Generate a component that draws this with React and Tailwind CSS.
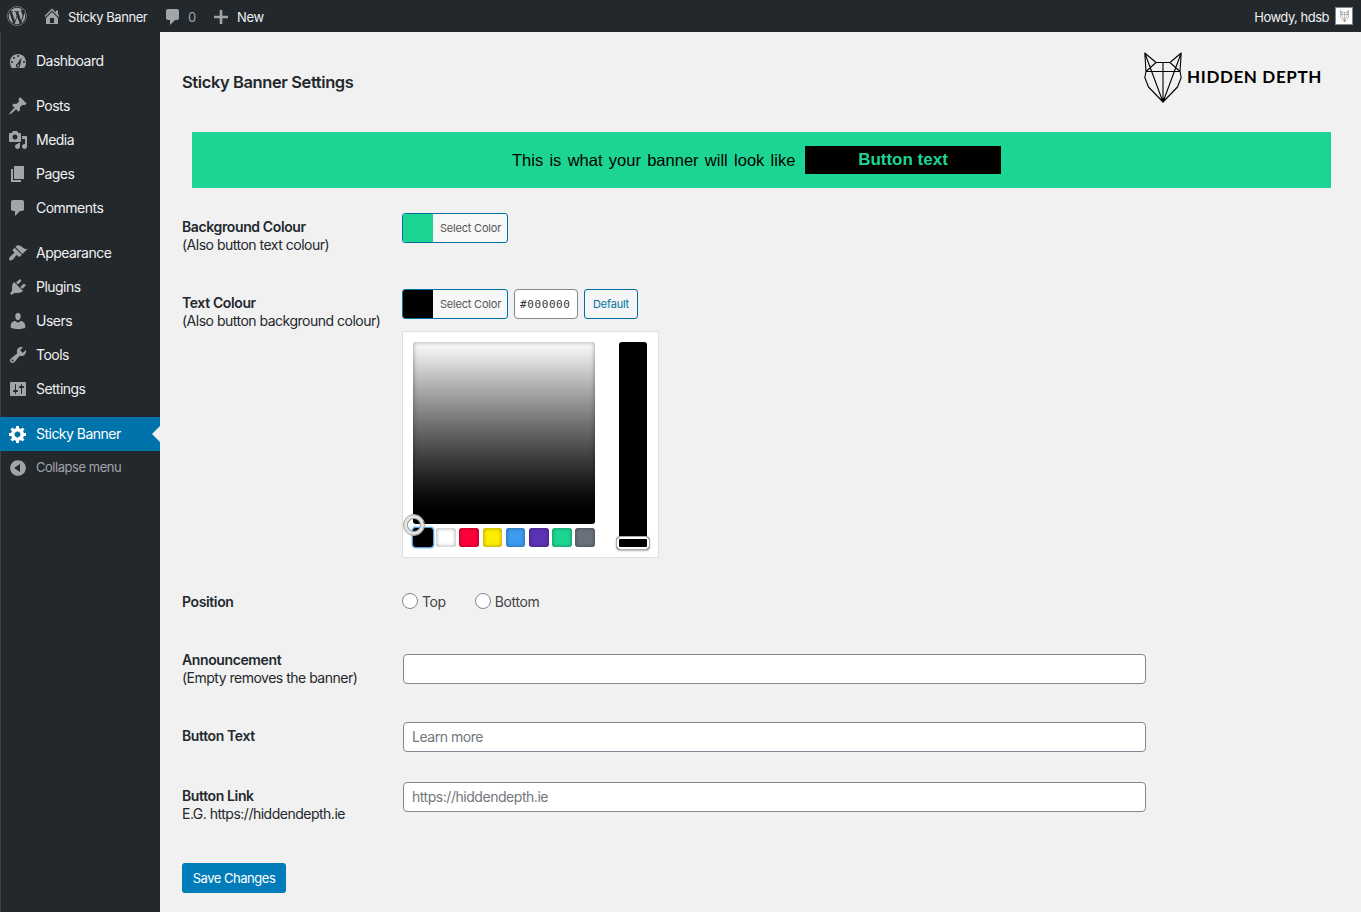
import React from "react";
import { FaWordpress } from "react-icons/fa";

const paths = {
  dashboard:
    "M3.76 17h12.48A7.96 7.96 0 0 0 18 11c0-4.42-3.58-8-8-8s-8 3.58-8 8c0 2.2.66 4.400 1.760 6zM10 4a1 1 0 1 1 0 2 1 1 0 0 1 0-2zM6 6a1 1 0 1 1 0 2 1 1 0 0 1 0-2zM13.500 6.500l-1.300 8a2.200 2.200 0 1 1-2.800-2.100zM4 10a1 1 0 1 1 0 2 1 1 0 0 1 0-2zM16 10a1 1 0 1 1 0 2 1 1 0 0 1 0-2zM10.300 13.400a1 1 0 1 0 .1 2 1 1 0 0 0-.1-2z",
  post: "M10.44 3.02l1.82-1.82 6.36 6.35-1.83 1.82c-1.05-.68-2.48-.57-3.41.36l-.75.75c-.92.93-1.04 2.35-.35 3.41l-1.83 1.82-2.41-2.41-2.8 2.79c-.42.42-3.38 2.71-3.8 2.29s1.86-3.39 2.28-3.81l2.79-2.79L4.1 9.36l1.83-1.82c1.05.69 2.48.57 3.4-.36l.75-.75c.93-.92 1.05-2.35.36-3.41z",
  media:
    "M13 11V4c0-.55-.45-1-1-1h-1.67L9 1H5L3.67 3H2c-.55 0-1 .45-1 1v7c0 .55.45 1 1 1h10c.55 0 1-.45 1-1zM7 4.5c1.38 0 2.5 1.12 2.5 2.5S8.38 9.5 7 9.5 4.5 8.38 4.5 7 5.62 4.5 7 4.5zM14 6h5v10.5c0 1.38-1.12 2.5-2.5 2.5S14 17.88 14 16.5s1.12-2.5 2.5-2.5c.17 0 .34.02.5.05V9h-3V6zm-4 8.05V13h2v3.5c0 1.38-1.12 2.5-2.5 2.5S7 17.88 7 16.5 8.12 14 9.5 14c.17 0 .34.02.5.05z",
  page: "M6 15V2h10v13H6zm-1 1h8v2H3V5h2v11z",
  comment:
    "M5 2h9c1.1 0 2 .9 2 2v7c0 1.1-.9 2-2 2h-2l-5 5v-5H5c-1.1 0-2-.9-2-2V4c0-1.1.9-2 2-2z",
  appearance:
    "M14.48 11.06L7.41 3.99l1.5-1.5c.5-.56 2.3-.47 3.51.32 1.21.8 1.43 1.28 2.91 2.1 1.18.64 2.45 1.26 4.45.85zm-.71.71L6.7 4.7 4.93 6.47c-.39.39-.39 1.02 0 1.41l1.06 1.06c.39.39.39 1.03 0 1.42-.6.6-1.43 1.11-2.21 1.69-.35.26-.7.53-1.01.84C1.43 14.23.4 16.08 1.4 17.07c.99 1 2.84-.03 4.18-1.36.31-.31.58-.66.85-1.02.57-.78 1.08-1.61 1.69-2.21.39-.39 1.02-.39 1.41 0l1.06 1.06c.39.39 1.02.39 1.41 0z",
  plugins:
    "M13.11 4.36L9.87 7.6 8 5.73l3.24-3.24c.35-.34 1.05-.2 1.56.32.52.51.66 1.21.31 1.55zm-8 1.77l.91-1.12 9.01 9.01-1.19.84c-.71.71-2.63 1.16-3.82 1.16H6.14L4.9 17.26c-.59.59-1.54.59-2.12 0-.59-.58-.59-1.53 0-2.12l1.24-1.24v-3.88c0-1.13.4-3.19 1.09-3.89zm7.26 3.97l3.24-3.24c.34-.35 1.04-.21 1.55.31.52.51.66 1.21.31 1.55l-3.24 3.25z",
  users:
    "M10 9.25c-2.27 0-2.73-3.44-2.73-3.44C7 4.02 7.82 2 9.97 2c2.16 0 2.98 2.02 2.71 3.81 0 0-.41 3.44-2.68 3.44zm0 2.57L12.72 10c2.39 0 4.52 2.33 4.52 4.53v2.49s-3.65 1.13-7.24 1.13c-3.65 0-7.24-1.13-7.24-1.13v-2.49c0-2.25 1.94-4.48 4.47-4.48z",
  tools:
    "M16.68 9.77c-1.34 1.34-3.3 1.67-4.95.99l-5.41 6.52c-.99.99-2.59.99-3.58 0s-.99-2.59 0-3.57l6.52-5.42c-.68-1.65-.35-3.61.99-4.95 1.28-1.28 3.12-1.62 4.72-1.06l-2.89 2.89 2.82 2.82 2.86-2.87c.53 1.58.18 3.39-1.08 4.65zM3.81 16.21c.4.39 1.04.39 1.43 0 .4-.4.4-1.04 0-1.43-.39-.4-1.03-.4-1.43 0-.39.39-.39 1.03 0 1.43z",
  settings:
    "M18 16V4c0-.55-.45-1-1-1H3c-.55 0-1 .45-1 1v12c0 .55.45 1 1 1h14c.55 0 1-.45 1-1zM8 11h1c.55 0 1 .45 1 1s-.45 1-1 1H8v1.5c0 .28-.22.5-.5.5s-.5-.22-.5-.5V13H6c-.55 0-1-.45-1-1s.45-1 1-1h1V5.5c0-.28.22-.5.5-.5s.5.22.5.5V11zm5-2h-1c-.55 0-1-.45-1-1s.45-1 1-1h1V5.5c0-.28.22-.5.5-.5s.5.22.5.5V7h1c.55 0 1 .45 1 1s-.45 1-1 1h-1v5.5c0 .28-.22.5-.5.5s-.5-.22-.5-.5V9z",
  gear: "M18 12h-2.18c-.17.7-.44 1.35-.81 1.93l1.54 1.54-2.1 2.1-1.54-1.54c-.58.36-1.23.63-1.91.79V19H8v-2.18c-.68-.16-1.33-.43-1.91-.79l-1.54 1.54-2.12-2.12 1.54-1.54c-.36-.58-.63-1.23-.79-1.91H1V9.03h2.17c.16-.7.44-1.35.8-1.94L2.43 5.55l2.1-2.1 1.54 1.54c.58-.37 1.24-.64 1.93-.81V2h3v2.18c.68.16 1.33.43 1.91.79l1.54-1.54 2.12 2.12-1.54 1.54c.36.59.64 1.24.8 1.94H18V12zm-8.5 1.5c1.66 0 3-1.34 3-3s-1.34-3-3-3-3 1.34-3 3 1.34 3 3 3z",
  collapse:
    "M10 2.16c4.33 0 7.84 3.51 7.84 7.84s-3.51 7.84-7.84 7.84S2.16 14.33 2.16 10 5.71 2.16 10 2.16zm2 11.72V6.12L6.18 9.97z",
  home: "M16 8.5l1.53 1.53-1.06 1.06L10 4.6l-6.47 6.49-1.06-1.06L10 2.5l4 4v-2h2v4zm-6-2.46l6 5.99V18H4v-5.97zM12 17v-5H8v5h4z",
  plus: "M17 8.700v2.600h-5.700v5.700H8.700v-5.700H3V8.700h5.700V3h2.600v5.700z",
};

function Icon({ name, className = "" }) {
  return (
    <svg viewBox="0 0 20 20" className={"size-5 shrink-0 " + className} fill="currentColor" fillRule="evenodd">
      <path d={paths[name]} />
    </svg>
  );
}

function Wolf({ className, stroke = 1.1 }) {
  return (
    <svg viewBox="0 0 38 51" className={className} fill="none" stroke="currentColor" strokeWidth={stroke} strokeLinejoin="round">
      <path d="M.8 1L12 10.500H26L37.200 1L36 19.500L37.200 25.500L33.500 35L19 50L4.500 35L.8 25.500L2 19.500ZM2 19.500H36M12 10.500L2 19.500M26 10.500L36 19.500M19 10.500V50M.8 1L19 50L37.200 1" />
      <path d="M17 47L19 50L21 47Z" fill="currentColor" />
    </svg>
  );
}

const menu = [
  [["dashboard", "Dashboard"]],
  [["post", "Posts"], ["media", "Media"], ["page", "Pages"], ["comment", "Comments"]],
  [["appearance", "Appearance"], ["plugins", "Plugins"], ["users", "Users"], ["tools", "Tools"], ["settings", "Settings"]],
];

const palette = ["bg-black", "bg-white", "bg-[#ff0039]", "bg-[#ffed00]", "bg-[#3c9cf0]", "bg-[#5d33b6]", "bg-[#1dd592]", "bg-[#69727b]"];

function AdminBar() {
  return (
    <header className="flex h-8 shrink-0 items-center bg-[#23282d] pl-[7px] pr-2 text-[13px] leading-5 text-[#f0f0f1]">
      <FaWordpress className="size-5 text-[#a0a5aa]" />
      <Icon name="home" className="ml-[15px] text-[#a0a5aa]" />
      <span className="ml-1.5 mt-px w-20 whitespace-nowrap tracking-[-0.43px]">Sticky Banner</span>
      <Icon name="comment" className="ml-[15px] mt-0.5 text-[#a0a5aa]" />
      <span className="ml-[5px] mt-px w-2 text-[#a0a5aa]">0</span>
      <Icon name="plus" className="ml-[15px] mt-px text-[#a0a5aa]" />
      <span className="ml-[6px] mt-px tracking-[-0.3px]">New</span>
      <span className="ml-auto mt-px tracking-[-0.5px]">Howdy, hdsb</span>
      <span className="ml-1.5 flex size-[18px] items-center justify-center border border-[#82878c] bg-white text-[#777]">
        <Wolf className="h-3 w-[9px]" stroke={2} />
      </span>
    </header>
  );
}

function Sidebar() {
  return (
    <nav className="w-40 shrink-0 border-l border-[#3d4246] bg-[#23282d] pt-3 text-[14px] leading-5 tracking-[-0.52px] text-[#f0f0f1]">
      {menu.map((group, i) => (
        <div key={i} className="mb-[11px]">
          {group.map(([icon, label]) => (
            <div key={label} className="flex h-[34px] items-center gap-2 pl-[7px]">
              <Icon name={icon} className="text-[#a0a5aa]" />
              <span>{label}</span>
            </div>
          ))}
        </div>
      ))}
      <div className="relative -ml-px flex h-[34px] items-center gap-2 bg-[#0073aa] pl-2 text-white">
        <Icon name="gear" />
        <span>Sticky Banner</span>
        <span className="absolute right-0 top-[9px] border-y-8 border-r-8 border-y-transparent border-r-[#f1f1f1]" />
      </div>
      <div className="flex h-[34px] items-center gap-2 pl-[7px] text-[13px] tracking-[-0.46px] text-[#a0a5aa]">
        <Icon name="collapse" />
        <span className="-mt-0.5">Collapse menu</span>
      </div>
    </nav>
  );
}

function Row({ title, note, className, children, labelClass = "" }) {
  return (
    <div className={"flex items-start " + className}>
      <div className={"w-[220px] shrink-0 whitespace-nowrap text-[14px] leading-[18px] text-[#23282d] " + labelClass}>
        <div className="font-semibold tracking-[-0.38px]">{title}</div>
        {note && <div className="tracking-[-0.5px]">{note}</div>}
      </div>
      {children}
    </div>
  );
}

function ColorButton({ swatch }) {
  return (
    <button className="flex h-[30px] w-[106px] overflow-hidden rounded-[3px] border border-[#0071a1] bg-[#f7f7f7] text-[11px] text-[#555]">
      <span className={"h-full w-[30px] " + swatch} />
      <span className="pl-[7px] leading-7 tracking-[-0.2px]">Select Color</span>
    </button>
  );
}

function Picker() {
  return (
    <div className="mt-3 flex h-[227px] w-[257px] border border-[#dfdfdf] bg-white pl-2.5 pt-2.5">
      <div className="w-[182px]">
        <div className="relative h-[182px] rounded-[3px] bg-linear-to-b from-white to-black shadow-[inset_0_0_5px_rgba(0,0,0,0.4)]">
          <span className="absolute -left-[10px] top-[172px] z-10 size-[22px] rounded-full border border-[#aaa] bg-transparent shadow-[inset_0_0_0_3px_#e4e4e4,inset_0_0_0_4px_#999]" />
        </div>
        <div className="mt-1 flex justify-between">
          {palette.map((c, i) => (
            <span
              key={c}
              className={"h-[19px] w-[19.500px] rounded-[3px] " + c + (i === 0 ? " shadow-[0_0_0_1px_#5b9dd9,0_0_2px_1px_rgba(30,140,190,0.8)]" : " shadow-[inset_0_0_4px_rgba(0,0,0,0.4)]")}
            />
          ))}
        </div>
      </div>
      <div className="relative ml-6 h-[205px] w-7 rounded-[3px] bg-black">
        <span className="absolute -left-[3px] top-[194px] h-[14px] w-[34px] rounded-[4px] border border-[#aaa] bg-black shadow-[inset_0_0_0_2px_#fff,0_1px_2px_rgba(0,0,0,0.3)]" />
      </div>
    </div>
  );
}

function TextField({ placeholder, className = "" }) {
  return (
    <input
      type="text"
      placeholder={placeholder}
      className={"ml-px h-[30px] w-[743px] rounded-[4px] border border-[#7e8993] bg-white px-2 pb-0.5 text-[14px] tracking-[-0.46px] placeholder:text-[#72777c] " + className}
    />
  );
}

function Radio({ label, className = "" }) {
  return (
    <label className={"flex h-4 items-center gap-1 text-[14px] tracking-[-0.38px] text-[#444] " + className}>
      <span className="size-4 rounded-full border border-[#7e8993] bg-white" />
      <span className="mt-0.5 leading-4">{label}</span>
    </label>
  );
}

export default function App() {
  return (
    <div className="flex h-[912px] w-[1361px] flex-col overflow-hidden bg-[#f1f1f1] font-['Inter',sans-serif]">
      <AdminBar />
      <div className="flex min-h-0 flex-1">
        <Sidebar />
        <main className="flex min-w-0 flex-1 flex-col items-start pl-[22px]">
          <div className="flex h-[100px] w-full items-center pr-[39px]">
            <h1 className="text-[16.500px] font-semibold tracking-[-0.4px] text-[#23282d]">Sticky Banner Settings</h1>
            <div className="-mt-[10px] ml-auto flex items-center gap-[5px] text-black">
              <Wolf className="h-[51px] w-[38px]" />
              <span className="w-[135px] whitespace-nowrap font-['Lato',sans-serif] text-[17px] font-bold tracking-[0.62px]">HIDDEN DEPTH</span>
            </div>
          </div>
          <div className="ml-2.5 flex h-14 w-[1139px] items-center bg-[#1dd592] pl-80 font-['Liberation_Sans',Arial,sans-serif] text-[16.500px] text-black">
            <span className="mt-px w-[283px] whitespace-nowrap [word-spacing:1.700px]">This is what your banner will look like</span>
            <span className="ml-[10px] h-7 w-[196px] bg-black text-center text-[17px] font-bold leading-[27px] text-[#1dd592]">Button text</span>
          </div>
          <Row title="Background Colour" note="(Also button text colour)" className="mt-[25px] h-[76px]" labelClass="pt-[5px]">
            <ColorButton swatch="bg-[#1dd592]" />
          </Row>
          <Row title="Text Colour" note="(Also button background colour)" className="h-[304px]" labelClass="pt-[5px]">
            <div>
              <div className="flex gap-1.5">
                <ColorButton swatch="bg-black" />
                <span className="h-[30px] w-16 rounded-[4px] border border-[#7e8993] bg-white pl-[5px] font-['DejaVu_Sans_Mono',monospace] text-[11px] leading-[29px] tracking-[0.6px] text-[#32373c]">#000000</span>
                <button className="h-[30px] w-[54px] rounded-[3px] border border-[#0071a1] bg-[#f3f5f6] text-[11px] tracking-[-0.2px] text-[#0071a1]">Default</button>
              </div>
              <Picker />
            </div>
          </Row>
          <Row title="Position" className="h-[61px]">
            <Radio label="Top" />
            <Radio label="Bottom" className="ml-[29px]" />
          </Row>
          <Row title="Announcement" note="(Empty removes the banner)" className="h-[68px]" labelClass="-mt-[3px]">
            <TextField />
          </Row>
          <Row title="Button Text" className="h-[60px]" labelClass="pt-[5px]">
            <TextField placeholder="Learn more" />
          </Row>
          <Row title="Button Link" note="E.G. https://hiddendepth.ie" className="h-[81px]" labelClass="pt-[5px]">
            <TextField placeholder="https://hiddendepth.ie" />
          </Row>
          <button className="h-[30px] w-[104px] rounded-[3px] bg-[#007cba] pt-0.5 text-[13px] tracking-[-0.48px] text-white">Save Changes</button>
        </main>
      </div>
    </div>
  );
}
